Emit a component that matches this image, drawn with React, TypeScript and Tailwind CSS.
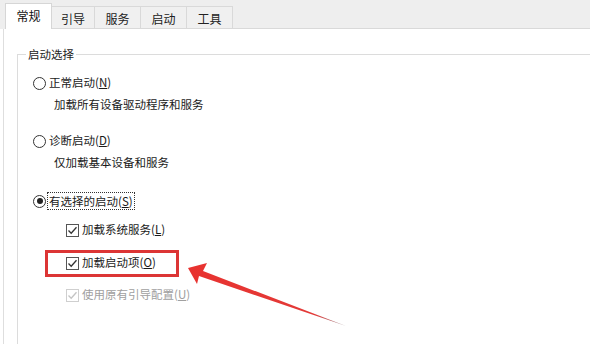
import React from "react";

const font = { fontFamily: '"Noto Sans CJK SC", "Noto Sans", sans-serif' };

function Radio({ checked }: { checked?: boolean }) {
  return (
    <span className="flex h-[13px] w-[13px] items-center justify-center rounded-full border border-[#333] bg-white">
      {checked && <span className="h-[6px] w-[6px] rounded-full bg-[#222]" />}
    </span>
  );
}

function Check({ disabled }: { disabled?: boolean }) {
  const c = disabled ? "#c4c4c4" : "#333";
  return (
    <span
      className={
        "flex h-[13px] w-[13px] items-center justify-center border bg-white " +
        (disabled ? "border-[#cfcfcf]" : "border-[#555]")
      }
    >
      <svg width="11" height="11" viewBox="0 0 11 11">
        <path d="M1.5 5.5 L4.2 8.3 L9.5 2.2" fill="none" stroke={c} strokeWidth="1.3" />
      </svg>
    </span>
  );
}

export default function App() {
  return (
    <div className="relative h-[344px] w-[590px] overflow-hidden bg-white text-[11.5px] text-[#1a1a1a]" style={font}>
      {/* tab strip */}
      <div className="flex h-[29px] items-end bg-[#eeeeee] pl-[5px] text-[12px]">
        <div className="relative z-10 flex h-[26px] w-[47px] items-start justify-center border border-b-0 border-[#d6d6d6] bg-white pt-[3px] text-[#111]">
          常规
        </div>
        {["引导", "服务", "启动", "工具"].map((t, i) => (
          <div
            key={t}
            className={
              "flex h-[23px] items-start justify-center border border-l-0 border-[#d9d9d9] bg-[#f0f0f0] pt-[3px] text-[#222] " +
              (i === 0 ? "w-[43px]" : "w-[46px]")
            }
          >
            {t}
          </div>
        ))}
        <div className="h-px flex-1 bg-[#d9d9d9]" />
      </div>

      {/* content panel */}
      <div className="ml-[3px] h-[315px] border-l border-[#dedede] bg-white pl-[13px] pt-[25px]">
        <div className="relative h-[300px] w-[600px] border-l border-t border-[#dcdcdc] pl-[15px]">
          <span className="absolute left-[8px] top-[-9px] bg-white px-[2px] leading-[16px] text-[#222]">启动选择</span>

          <div className="mt-[19px] flex h-[18px] items-center gap-[3px]">
            <Radio />
            <span>正常启动(<span className="underline">N</span>)</span>
          </div>
          <div className="ml-[21px] mt-[4px] flex h-[18px] items-center">加载所有设备驱动程序和服务</div>

          <div className="mt-[18px] flex h-[18px] items-center gap-[3px]">
            <Radio />
            <span>诊断启动(<span className="underline">D</span>)</span>
          </div>
          <div className="ml-[21px] mt-[4px] flex h-[18px] items-center">仅加载基本设备和服务</div>

          <div className="mt-[20px] flex h-[18px] items-center gap-[1px]">
            <Radio checked />
            <span className="border border-dotted border-[#333] px-[1px] leading-[16px]">
              有选择的启动(<span className="underline">S</span>)
            </span>
          </div>

          <div className="ml-[33px] mt-[11px] flex h-[18px] items-center gap-[3px]">
            <Check />
            <span>加载系统服务(<span className="underline">L</span>)</span>
          </div>
          <div className="ml-[33px] mt-[15px] flex h-[18px] items-center gap-[3px]">
            <Check />
            <span>加载启动项(<span className="underline">O</span>)</span>
          </div>
          <div className="ml-[33px] mt-[14px] flex h-[18px] items-center gap-[3px] text-[#a0a0a0]">
            <Check disabled />
            <span>使用原有引导配置(<span className="underline">U</span>)</span>
          </div>
        </div>
      </div>

      {/* annotation: red box */}
      <div className="absolute left-[45px] top-[250px] h-[27px] w-[134px] border-[3px] border-[#dc3535]" />

      {/* annotation: arrow */}
      <svg className="absolute left-0 top-0" width="590" height="344" viewBox="0 0 590 344">
        <defs>
          <linearGradient id="ag" x1="188" y1="268" x2="346" y2="326" gradientUnits="userSpaceOnUse">
            <stop offset="0" stopColor="#e8322f" />
            <stop offset="0.8" stopColor="#e33a38" />
            <stop offset="1" stopColor="#9a8f95" />
          </linearGradient>
        </defs>
        <polygon points="188,268 207,263 203,271 346,326 199,276 197,284" fill="url(#ag)" />
      </svg>
    </div>
  );
}
